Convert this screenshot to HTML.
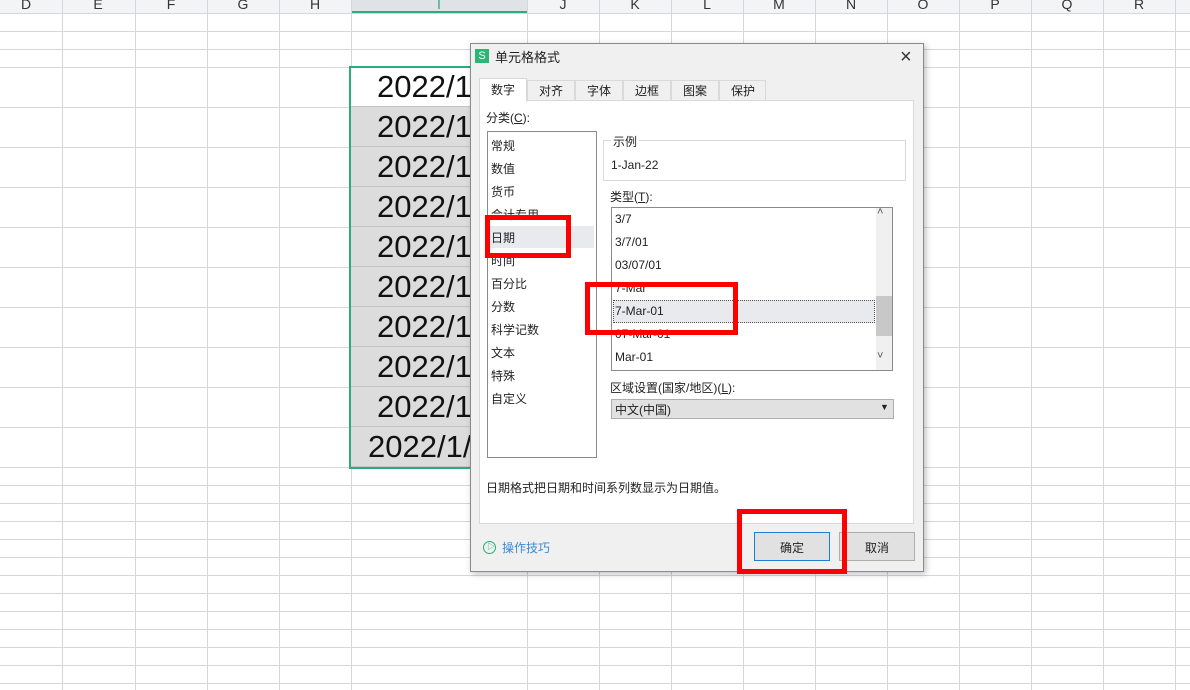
<!DOCTYPE html>
<html><head><meta charset="utf-8"><style>
*{margin:0;padding:0;box-sizing:border-box}
body{width:1190px;height:690px;overflow:hidden;background:#fff;position:relative;font-family:"Liberation Sans","Noto Sans CJK SC",sans-serif;}
.a{position:absolute}
.hl{position:absolute;left:0;width:1190px;height:1px;background:#d4d6dc}
.vl{position:absolute;top:0;width:1px;height:690px;background:#d4d6dc}
.ch{position:absolute;top:-4px;font-size:14px;color:#333;width:72px;text-align:center}
.cell{position:absolute;left:351px;width:176px;height:40px;background:#dcdcdc;border-bottom:1px solid #c4c4c4;font-size:31px;color:#111;line-height:40px}
.t{font-size:12px;color:#222;position:absolute;white-space:nowrap}
.red{position:absolute;border:5px solid #f00}
</style></head><body>
<div class="a" style="left:0;top:0;width:1190px;height:13px;background:#f3f4f6"></div>
<div class="a" style="left:351px;top:0;width:176px;height:13px;background:#dfe2e6"></div>
<div class="a" style="left:351px;top:11px;width:176px;height:2px;background:#2bac7a"></div>
<div class="hl" style="top:13px"></div><div class="hl" style="top:31px"></div><div class="hl" style="top:49px"></div><div class="hl" style="top:67px"></div>
<div class="hl" style="top:107px"></div><div class="hl" style="top:147px"></div><div class="hl" style="top:187px"></div><div class="hl" style="top:227px"></div><div class="hl" style="top:267px"></div><div class="hl" style="top:307px"></div><div class="hl" style="top:347px"></div><div class="hl" style="top:387px"></div><div class="hl" style="top:427px"></div><div class="hl" style="top:467px"></div>
<div class="hl" style="top:485px"></div><div class="hl" style="top:503px"></div><div class="hl" style="top:521px"></div><div class="hl" style="top:539px"></div><div class="hl" style="top:557px"></div><div class="hl" style="top:575px"></div><div class="hl" style="top:593px"></div><div class="hl" style="top:611px"></div><div class="hl" style="top:629px"></div><div class="hl" style="top:647px"></div><div class="hl" style="top:665px"></div><div class="hl" style="top:683px"></div>
<div class="vl" style="left:62px"></div><div class="vl" style="left:135px"></div><div class="vl" style="left:207px"></div><div class="vl" style="left:279px"></div><div class="vl" style="left:351px"></div><div class="vl" style="left:527px"></div><div class="vl" style="left:599px"></div><div class="vl" style="left:671px"></div><div class="vl" style="left:743px"></div><div class="vl" style="left:815px"></div><div class="vl" style="left:887px"></div><div class="vl" style="left:959px"></div><div class="vl" style="left:1031px"></div><div class="vl" style="left:1103px"></div><div class="vl" style="left:1175px"></div>
<div class="ch" style="left:-10px">D</div><div class="ch" style="left:62px">E</div><div class="ch" style="left:135px">F</div><div class="ch" style="left:207px">G</div><div class="ch" style="left:279px">H</div><div class="ch" style="left:403px;color:#2bac7a">I</div><div class="ch" style="left:527px">J</div><div class="ch" style="left:599px">K</div><div class="ch" style="left:671px">L</div><div class="ch" style="left:743px">M</div><div class="ch" style="left:815px">N</div><div class="ch" style="left:887px">O</div><div class="ch" style="left:959px">P</div><div class="ch" style="left:1031px">Q</div><div class="ch" style="left:1103px">R</div>
<div class="cell" style="top:67px;background:#fff"><span class="a" style="left:26px">2022/1/1</span></div>
<div class="cell" style="top:107px"><span class="a" style="left:26px">2022/1/2</span></div>
<div class="cell" style="top:147px"><span class="a" style="left:26px">2022/1/3</span></div>
<div class="cell" style="top:187px"><span class="a" style="left:26px">2022/1/4</span></div>
<div class="cell" style="top:227px"><span class="a" style="left:26px">2022/1/5</span></div>
<div class="cell" style="top:267px"><span class="a" style="left:26px">2022/1/6</span></div>
<div class="cell" style="top:307px"><span class="a" style="left:26px">2022/1/7</span></div>
<div class="cell" style="top:347px"><span class="a" style="left:26px">2022/1/8</span></div>
<div class="cell" style="top:387px"><span class="a" style="left:26px">2022/1/9</span></div>
<div class="cell" style="top:427px"><span class="a" style="left:17px">2022/1/10</span></div>
<div class="a" style="left:349px;top:66px;width:180px;height:403px;border:2px solid #2bac7a"></div>

<!-- dialog -->
<div class="a" style="left:470px;top:43px;width:454px;height:529px;background:#f0f0f0;border:1px solid #8a8a8a;box-shadow:2px 2px 6px rgba(0,0,0,.25)">
 <div class="a" style="left:4px;top:5px;width:14px;height:14px;background:#2bb673;color:#fff;font-size:11px;text-align:center;line-height:14px">S</div>
 <div class="t" style="left:24px;top:3px;font-size:13px">单元格格式</div>
 <div class="t" style="left:429px;top:2px;font-size:20px;font-weight:300;color:#333">×</div>
 <div class="a" style="left:8px;top:56px;width:435px;height:424px;background:#fff;border:1px solid #d9d9d9"></div>
 <div class="a" style="left:8px;top:34px;width:48px;height:24px;background:#fff;border:1px solid #d9d9d9;border-bottom:none"></div>
 <div class="t" style="left:20px;top:37px">数字</div>
 <div class="a" style="left:56px;top:36px;width:48px;height:21px;background:#f0f0f0;border:1px solid #d9d9d9"></div><div class="t" style="left:68px;top:38px">对齐</div>
 <div class="a" style="left:104px;top:36px;width:48px;height:21px;background:#f0f0f0;border:1px solid #d9d9d9"></div><div class="t" style="left:116px;top:38px">字体</div>
 <div class="a" style="left:152px;top:36px;width:48px;height:21px;background:#f0f0f0;border:1px solid #d9d9d9"></div><div class="t" style="left:164px;top:38px">边框</div>
 <div class="a" style="left:200px;top:36px;width:48px;height:21px;background:#f0f0f0;border:1px solid #d9d9d9"></div><div class="t" style="left:212px;top:38px">图案</div>
 <div class="a" style="left:248px;top:36px;width:47px;height:21px;background:#f0f0f0;border:1px solid #d9d9d9"></div><div class="t" style="left:260px;top:38px">保护</div>
 <div class="t" style="left:15px;top:65px">分类(<u>C</u>):</div>
 <div class="a" style="left:16px;top:87px;width:110px;height:327px;background:#fff;border:1px solid #8a8a8a"></div>
 <div class="a" style="left:17px;top:182px;width:106px;height:22px;background:#e8eaee"></div>
 <div class="t" style="left:20px;top:93px">常规</div><div class="t" style="left:20px;top:116px">数值</div><div class="t" style="left:20px;top:139px">货币</div><div class="t" style="left:20px;top:162px">会计专用</div><div class="t" style="left:20px;top:185px">日期</div><div class="t" style="left:20px;top:208px">时间</div><div class="t" style="left:20px;top:231px">百分比</div><div class="t" style="left:20px;top:254px">分数</div><div class="t" style="left:20px;top:277px">科学记数</div><div class="t" style="left:20px;top:300px">文本</div><div class="t" style="left:20px;top:323px">特殊</div><div class="t" style="left:20px;top:346px">自定义</div>
 <div class="a" style="left:132px;top:96px;width:303px;height:41px;border:1px solid #d9d9d9"></div>
 <div class="t" style="left:140px;top:89px;background:#fff;padding:0 2px">示例</div>
 <div class="t" style="left:140px;top:114px">1-Jan-22</div>
 <div class="t" style="left:139px;top:144px">类型(<u>T</u>):</div>
 <div class="a" style="left:140px;top:163px;width:282px;height:164px;background:#fff;border:1px solid #8a8a8a"></div>
 <div class="a" style="left:142px;top:256px;width:262px;height:23px;background:#e8eaee;border:1px dotted #555"></div>
 <div class="a" style="left:405px;top:164px;width:16px;height:162px;background:#f0f0f0"></div>
 <div class="a" style="left:405px;top:252px;width:16px;height:40px;background:#c8c8c8"></div>
 <div class="t" style="left:406px;top:162px;font-size:11px;color:#555">˄</div>
 <div class="t" style="left:406px;top:306px;font-size:11px;color:#555">˅</div>
 <div class="t" style="left:144px;top:168px">3/7</div><div class="t" style="left:144px;top:191px">3/7/01</div><div class="t" style="left:144px;top:214px">03/07/01</div><div class="t" style="left:144px;top:237px">7-Mar</div><div class="t" style="left:144px;top:260px">7-Mar-01</div><div class="t" style="left:144px;top:283px">07-Mar-01</div><div class="t" style="left:144px;top:306px">Mar-01</div>
 <div class="t" style="left:139px;top:335px">区域设置(国家/地区)(<u>L</u>):</div>
 <div class="a" style="left:140px;top:355px;width:283px;height:20px;background:#e1e1e1;border:1px solid #adadad"></div>
 <div class="t" style="left:144px;top:357px">中文(中国)</div>
 <div class="t" style="left:409px;top:358px;font-size:9px">▼</div>
 <div class="t" style="left:15px;top:435px">日期格式把日期和时间系列数显示为日期值。</div>
 <div class="a" style="left:12px;top:497px;width:13px;height:13px;border:1px solid #2bac7a;border-radius:50%"></div>
 <div class="t" style="left:16px;top:497px;font-size:8px;color:#2bac7a">▷</div>
 <div class="t" style="left:31px;top:495px;color:#3a8ad8">操作技巧</div>
 <div class="a" style="left:283px;top:488px;width:76px;height:29px;background:#e1e1e1;border:1px solid #1e7fd6"></div>
 <div class="t" style="left:309px;top:495px">确定</div>
 <div class="a" style="left:368px;top:488px;width:76px;height:29px;background:#e1e1e1;border:1px solid #adadad"></div>
 <div class="t" style="left:394px;top:495px">取消</div>
</div>
<div class="red" style="left:485px;top:215px;width:86px;height:43px"></div>
<div class="red" style="left:585px;top:282px;width:153px;height:53px"></div>
<div class="red" style="left:737px;top:509px;width:110px;height:65px"></div>
</body></html>
